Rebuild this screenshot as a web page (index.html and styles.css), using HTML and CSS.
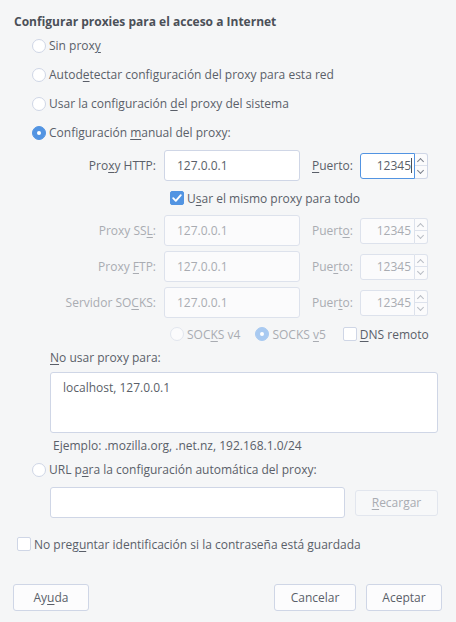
FILE: index.html
```html
<!DOCTYPE html>
<html lang="es">
<head>
<meta charset="utf-8">
<title>Configuración de conexión</title>
<link rel="stylesheet" href="styles.css">
</head>
<body>
<div class="dialog">
  <div class="title">Configurar proxies para el acceso a Internet</div>

  <div class="optrow"><span class="radio"></span><span>Sin prox<u>y</u></span></div>
  <div class="optrow"><span class="radio"></span><span>Autod<u>e</u>tectar configuración del proxy para esta red</span></div>
  <div class="optrow"><span class="radio"></span><span>Usar la configuración <u>d</u>el proxy del sistema</span></div>
  <div class="optrow"><span class="radio checked"></span><span>Configuración <u>m</u>anual del proxy:</span></div>

  <div class="grid">
    <span class="lbl">Pro<u>x</u>y HTTP:</span>
    <div class="input">127.0.0.1</div>
    <span class="plbl"><u>P</u>uerto:</span>
    <div class="spin"><div class="num focus">12345<span class="caret"></span></div><div class="arrows"><span class="up"></span><span class="down"></span></div></div>

    <div class="same"><span class="check checked"><svg viewBox="0 0 14 14" width="14" height="14"><path d="M3.2 7.2 L5.8 9.8 L10.8 4.2" fill="none" stroke="#fff" stroke-width="1.9" stroke-linecap="round" stroke-linejoin="round"/></svg></span><span>U<u>s</u>ar el mismo proxy para todo</span></div>

    <span class="lbl dis">Proxy SS<u>L</u>:</span>
    <div class="input dis">127.0.0.1</div>
    <span class="plbl dis">Puert<u>o</u>:</span>
    <div class="spin dis"><div class="num">12345</div><div class="arrows"><span class="up"></span><span class="down"></span></div></div>

    <span class="lbl dis">Proxy <u>F</u>TP:</span>
    <div class="input dis">127.0.0.1</div>
    <span class="plbl dis">Pue<u>r</u>to:</span>
    <div class="spin dis"><div class="num">12345</div><div class="arrows"><span class="up"></span><span class="down"></span></div></div>

    <span class="lbl dis">Servidor SO<u>C</u>KS:</span>
    <div class="input dis">127.0.0.1</div>
    <span class="plbl dis">Puer<u>t</u>o:</span>
    <div class="spin dis"><div class="num">12345</div><div class="arrows"><span class="up"></span><span class="down"></span></div></div>

    <div class="socks">
      <span class="item dis"><span class="radio"></span><span>SOC<u>K</u>S v4</span></span>
      <span class="item dis"><span class="radio checked"></span><span>SOCKS <u>v</u>5</span></span>
      <span class="item"><span class="check"></span><span><u>D</u>NS remoto</span></span>
    </div>
  </div>

  <div class="sub">
    <div class="noproxy"><u>N</u>o usar proxy para:</div>
    <div class="textarea">localhost, 127.0.0.1</div>
    <div class="example">Ejemplo: .mozilla.org, .net.nz, 192.168.1.0/24</div>
  </div>

  <div class="optrow url"><span class="radio"></span><span>URL p<u>a</u>ra la configuración automática del proxy:</span></div>
  <div class="urlrow">
    <div class="input urlin"></div>
    <div class="btn dis reload"><u>R</u>ecargar</div>
  </div>

  <div class="nopass"><span class="check"></span><span>No preg<u>u</u>ntar identificación si la contraseña está guardada</span></div>

  <div class="buttons">
    <div class="btn help">Ay<u>u</u>da</div>
    <div class="spacer"></div>
    <div class="btn cancel">Cancelar</div>
    <div class="btn ok">Aceptar</div>
  </div>
</div>
</body>
</html>
```
FILE: styles.css
```css
* { box-sizing: border-box; }
html, body { margin: 0; padding: 0; }
body {
  background: #f5f6f7;
  color: #5a5f69;
  font-family: "Open Sans", "Noto Sans", sans-serif;
  font-size: 12px;
  width: 456px;
  height: 622px;
  overflow: hidden;
}
u { text-decoration: underline; text-underline-offset: 2px; }
.dialog { padding: 13px 13px 0 14px; display: flex; flex-direction: column; }
.title { font-weight: 700; height: 18px; line-height: 18px; color: #4b5058; }
.optrow { display: flex; align-items: center; height: 29px; padding-left: 18px; white-space: nowrap; }
.radio {
  display: inline-block; width: 14px; height: 14px; border-radius: 50%;
  border: 1px solid #cfd6e6; background: #fff; margin-right: 3px; flex: none; position: relative;
}
.radio.checked { background: #5294e2; border-color: #5294e2; }
.radio.checked::after {
  content: ""; position: absolute; left: 4px; top: 4px; width: 4px; height: 4px; border-radius: 50%; background: #fff;
}
.dis .radio { background: #fbfbfc; border-color: #e2e6ee; }
.dis .radio.checked { background: #a9caf1; border-color: #a9caf1; }
.dis .radio.checked::after { background: #fff; }

.grid {
  display: grid;
  margin-left: 36px;
  margin-top: 3px;
  grid-template-columns: 106px 136px 44px 68px;
  column-gap: 8px;
  grid-template-rows: 31px 24px 31px 31px 31px 22px;
  row-gap: 5px;
  align-items: center;
  white-space: nowrap;
}
.grid .plbl { margin-left: 4px; }
.lbl { text-align: right; }
.dis { color: #a9acb2; }
.input {
  height: 31px; background: #fff; border: 1px solid #cfd6e6; border-radius: 3px;
  padding-left: 12px; line-height: 29px;
}
.input.dis { background: #fbfbfc; border-color: #dde2ec; }
.spin { display: flex; height: 26px; }
.num {
  width: 55px; height: 26px; border: 1px solid #cfd6e6; border-radius: 3px 0 0 3px; background: #fff;
  text-align: right; padding-right: 1px; line-height: 24px; position: relative;
}
.num.focus { border-color: #5294e2; padding-right: 2px; }
.caret { display: inline-block; width: 1px; height: 15px; background: #4b5058; vertical-align: -3px; margin-left: 0; }
.dis .num { background: #fbfbfc; border-color: #dde2ec; padding-right: 3px; }
.arrows {
  width: 13px; height: 26px; border: 1px solid #cfd6e6; border-left: none; border-radius: 0 3px 3px 0;
  display: flex; flex-direction: column; background: #fbfbfc;
}
.dis .arrows { border-color: #dde2ec; }
.arrows span { flex: 1; position: relative; }
.arrows .up { border-bottom: 1px solid #dde2ec; }
.arrows span::after {
  content: ""; position: absolute; left: 3px; width: 4px; height: 4px;
  border-left: 1px solid #7c818c; border-top: 1px solid #7c818c;
}
.arrows .up::after { top: 5px; transform: rotate(45deg); }
.arrows .down::after { top: 2px; transform: rotate(225deg); }
.dis .arrows span::after { border-color: #b8bcc4; }

.same { grid-column: 2 / 5; display: flex; align-items: center; padding-left: 6px; }
.check {
  display: inline-flex; width: 14px; height: 14px; border: 1px solid #cfd6e6; border-radius: 2px;
  background: #fff; margin-right: 3px; flex: none; align-items: center; justify-content: center;
}
.check svg { display: block; margin: -1px; }
.check.checked { background: #5294e2; border-color: #5294e2; }

.socks { grid-column: 2 / 5; display: flex; align-items: center; padding-left: 6px; }
.socks .item { display: flex; align-items: center; }
.socks .item:nth-child(1) { margin-right: 15px; }
.socks .item:nth-child(2) { margin-right: 17px; }

.sub { margin-left: 36px; margin-right: 5px; display: flex; flex-direction: column; }
.noproxy { height: 18px; line-height: 18px; margin-top: 4px; }
.textarea {
  margin-top: 5px; height: 61px; background: #fff; border: 1px solid #cfd6e6; border-radius: 3px;
  padding: 6px 12px;
}
.example { height: 18px; line-height: 18px; margin-top: 4px; padding-left: 3px; }
.url { height: 23px; margin-top: 3px; }
.urlrow { display: flex; align-items: center; margin-left: 36px; margin-top: 6px; height: 31px; }
.urlin { width: 295px; }
.btn {
  height: 27px; line-height: 25px; border: 1px solid #cfd6e6; border-radius: 3px; background: #fcfcfd;
  text-align: center;
}
.btn.dis { border-color: #e2e6ee; background: #f7f8f9; }
.reload { width: 83px; margin-left: 10px; height: 26px; line-height: 24px; }
.nopass { display: flex; align-items: center; height: 20px; margin-top: 16px; padding-left: 3px; white-space: nowrap; }
.buttons { display: flex; margin-top: 30px; padding-left: 0; }
.help { width: 76px; margin-left: -1px; }
.spacer { flex: 1; }
.cancel { width: 82px; }
.ok { width: 76px; margin-left: 10px; margin-right: 1px; }
```
